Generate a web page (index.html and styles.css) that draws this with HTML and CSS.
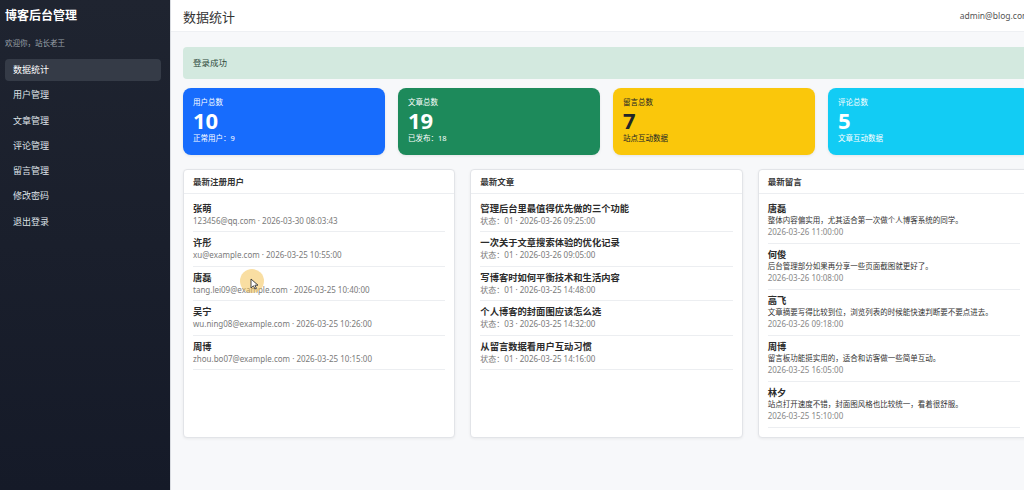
FILE: index.html
```html
<!DOCTYPE html>
<html lang="zh-CN">
<head>
    <meta charset="UTF-8">
    <meta name="viewport" content="width=device-width, initial-scale=1.0">
    <title>数据统计 - 博客后台管理</title>
    <link rel="stylesheet" href="styles.css">
</head>
<body>
<div class="layout">
    <aside class="sidebar">
        <div class="brand">博客后台管理</div>
        <div class="welcome">欢迎你，站长老王</div>
        <nav class="nav">
            <a class="nav-item active" href="#">数据统计</a>
            <a class="nav-item" href="#">用户管理</a>
            <a class="nav-item" href="#">文章管理</a>
            <a class="nav-item" href="#">评论管理</a>
            <a class="nav-item" href="#">留言管理</a>
            <a class="nav-item" href="#">修改密码</a>
            <a class="nav-item" href="#">退出登录</a>
        </nav>
    </aside>

    <main class="main">
        <header class="topbar">
            <h1>数据统计</h1>
            <span class="account">admin@blog.com</span>
        </header>

        <div class="content">
            <div class="alert">登录成功</div>

            <div class="stats">
                <div class="stat blue">
                    <div class="stat-label">用户总数</div>
                    <div class="stat-num">10</div>
                    <div class="stat-sub">正常用户：9</div>
                </div>
                <div class="stat green">
                    <div class="stat-label">文章总数</div>
                    <div class="stat-num">19</div>
                    <div class="stat-sub">已发布：18</div>
                </div>
                <div class="stat yellow">
                    <div class="stat-label">留言总数</div>
                    <div class="stat-num">7</div>
                    <div class="stat-sub">站点互动数据</div>
                </div>
                <div class="stat cyan">
                    <div class="stat-label">评论总数</div>
                    <div class="stat-num">5</div>
                    <div class="stat-sub">文章互动数据</div>
                </div>
            </div>

            <div class="panels">
                <section class="panel">
                    <div class="panel-head">最新注册用户</div>
                    <ul class="list">
                        <li><div class="item-title">张萌</div><div class="item-sub">123456@qq.com · 2026-03-30 08:03:43</div></li>
                        <li><div class="item-title">许彤</div><div class="item-sub">xu@example.com · 2026-03-25 10:55:00</div></li>
                        <li><div class="item-title">唐磊</div><div class="item-sub">tang.lei09@example.com · 2026-03-25 10:40:00</div></li>
                        <li><div class="item-title">吴宁</div><div class="item-sub">wu.ning08@example.com · 2026-03-25 10:26:00</div></li>
                        <li><div class="item-title">周博</div><div class="item-sub">zhou.bo07@example.com · 2026-03-25 10:15:00</div></li>
                    </ul>
                </section>

                <section class="panel">
                    <div class="panel-head">最新文章</div>
                    <ul class="list">
                        <li><div class="item-title">管理后台里最值得优先做的三个功能</div><div class="item-sub">状态：01 · 2026-03-26 09:25:00</div></li>
                        <li><div class="item-title">一次关于文章搜索体验的优化记录</div><div class="item-sub">状态：01 · 2026-03-26 09:05:00</div></li>
                        <li><div class="item-title">写博客时如何平衡技术和生活内容</div><div class="item-sub">状态：01 · 2026-03-25 14:48:00</div></li>
                        <li><div class="item-title">个人博客的封面图应该怎么选</div><div class="item-sub">状态：03 · 2026-03-25 14:32:00</div></li>
                        <li><div class="item-title">从留言数据看用户互动习惯</div><div class="item-sub">状态：01 · 2026-03-25 14:16:00</div></li>
                    </ul>
                </section>

                <section class="panel">
                    <div class="panel-head">最新留言</div>
                    <ul class="list messages">
                        <li><div class="item-title">唐磊</div><div class="item-text">整体内容偏实用，尤其适合第一次做个人博客系统的同学。</div><div class="item-date">2026-03-26 11:00:00</div></li>
                        <li><div class="item-title">何俊</div><div class="item-text">后台管理部分如果再分享一些页面截图就更好了。</div><div class="item-date">2026-03-26 10:08:00</div></li>
                        <li><div class="item-title">高飞</div><div class="item-text">文章摘要写得比较到位，浏览列表的时候能快速判断要不要点进去。</div><div class="item-date">2026-03-26 09:18:00</div></li>
                        <li><div class="item-title">周博</div><div class="item-text">留言板功能挺实用的，适合和访客做一些简单互动。</div><div class="item-date">2026-03-25 16:05:00</div></li>
                        <li><div class="item-title">林夕</div><div class="item-text">站点打开速度不错，封面图风格也比较统一，看着很舒服。</div><div class="item-date">2026-03-25 15:10:00</div></li>
                    </ul>
                </section>
            </div>
        </div>
    </main>
</div>

<div class="cursor-mark">
    <svg width="9" height="12" viewBox="0 0 9 12"><path d="M1 1 L1 10 L3.4 7.8 L5 11 L6.4 10.3 L4.9 7.2 L8 7.2 Z" fill="#fff" stroke="#333" stroke-width="0.9"/></svg>
</div>
</body>
</html>
```

FILE: styles.css
```css
html, body {
    margin: 0;
    padding: 0;
    overflow: hidden;
}
body {
    font-family: "Noto Sans", "Noto Sans CJK SC", sans-serif;
    color: #212529;
    background-color: #f7f8fa;
}
.layout {
    display: flex;
    width: 1043px;
    min-height: 490px;
}

/* sidebar */
.sidebar {
    width: 170px;
    flex-shrink: 0;
    box-sizing: border-box;
    padding: 8px 9px 0 5px;
    background: linear-gradient(#1f2430, #151a28);
    color: #e4e7eb;
}
.brand {
    font-size: 12px;
    line-height: 16px;
    font-weight: 700;
    color: #fff;
}
.welcome {
    margin-top: 14px;
    font-size: 7.5px;
    line-height: 11px;
    color: #9aa0a9;
}
.nav {
    margin-top: 10px;
    display: flex;
    flex-direction: column;
    gap: 3.6px;
}
.nav-item {
    display: block;
    height: 21.7px;
    line-height: 21.7px;
    padding-left: 8px;
    border-radius: 4px;
    font-size: 9px;
    color: #dfe3e8;
    text-decoration: none;
}
.nav-item.active {
    background-color: #353b47;
    color: #fff;
}

/* main */
.main {
    flex: 1;
    border-left: 1px solid #d9dce1;
    background-color: #f7f8fa;
}
.topbar {
    height: 31px;
    display: flex;
    align-items: center;
    justify-content: space-between;
    padding: 0 13px 0 12px;
    background-color: #fff;
    border-bottom: 1px solid #eef0f3;
}
.topbar h1 {
    margin: 2px 0 0;
    font-size: 13px;
    font-weight: 400;
    color: #333;
}
.account {
    font-size: 8.5px;
    color: #555;
}
.content {
    padding: 15px 13px 14px 12px;
}
.alert {
    height: 32px;
    line-height: 32px;
    padding-left: 10px;
    border-radius: 4px;
    background-color: #d3e9df;
    font-size: 8.5px;
    color: #2f4a3c;
}

/* stat cards */
.stats {
    margin-top: 8.5px;
    display: grid;
    grid-template-columns: repeat(4, 1fr);
    gap: 13px;
}
.stat {
    height: 67px;
    box-sizing: border-box;
    padding: 9px 10px;
    border-radius: 8px;
    color: #fff;
    box-shadow: 0 1px 3px rgba(0, 0, 0, 0.08);
}
.stat.blue { background-color: #176cfd; }
.stat.green { background-color: #1d8a5b; }
.stat.yellow { background-color: #fac70b; color: #212529; }
.stat.cyan { background-color: #12ccf4; }
.stat-label {
    font-size: 7.5px;
    line-height: 11px;
}
.stat-num {
    font-size: 22px;
    line-height: 24px;
    font-weight: 700;
}
.stat-sub {
    margin-top: 1.5px;
    font-size: 7.5px;
    line-height: 11px;
}

/* panels */
.panels {
    margin-top: 14px;
    display: grid;
    grid-template-columns: repeat(3, 1fr);
    gap: 15px;
}
.panel {
    background-color: #fff;
    border: 1px solid #e2e4e8;
    border-radius: 4px;
    box-shadow: 0 1px 3px rgba(0, 0, 0, 0.06);
    padding-bottom: 9px;
}
.panel-head {
    padding: 6px 9px;
    font-size: 8.5px;
    line-height: 11px;
    font-weight: 700;
    color: #333;
    border-bottom: 1px solid #eceef1;
}
.list {
    list-style: none;
    margin: 0;
    padding: 4px 9px 0;
}
.list li {
    padding: 5px 0;
    border-bottom: 1px solid #eceef1;
}
.item-title {
    font-size: 9.3px;
    line-height: 12px;
    font-weight: 700;
    color: #2b2b2b;
}
.item-sub {
    font-size: 8px;
    line-height: 11.5px;
    color: #7a7a7a;
}
.messages li {
    padding-bottom: 6px;
}
.item-text {
    font-size: 7.5px;
    line-height: 11px;
    color: #333;
}
.item-date {
    font-size: 8px;
    line-height: 11px;
    color: #888;
}

/* screen-recording cursor highlight */
.cursor-mark {
    position: absolute;
    left: 240px;
    top: 269px;
    width: 24px;
    height: 24px;
    border-radius: 50%;
    background-color: rgba(244, 190, 70, 0.5);
}
.cursor-mark svg {
    position: absolute;
    left: 10px;
    top: 9px;
}
```
